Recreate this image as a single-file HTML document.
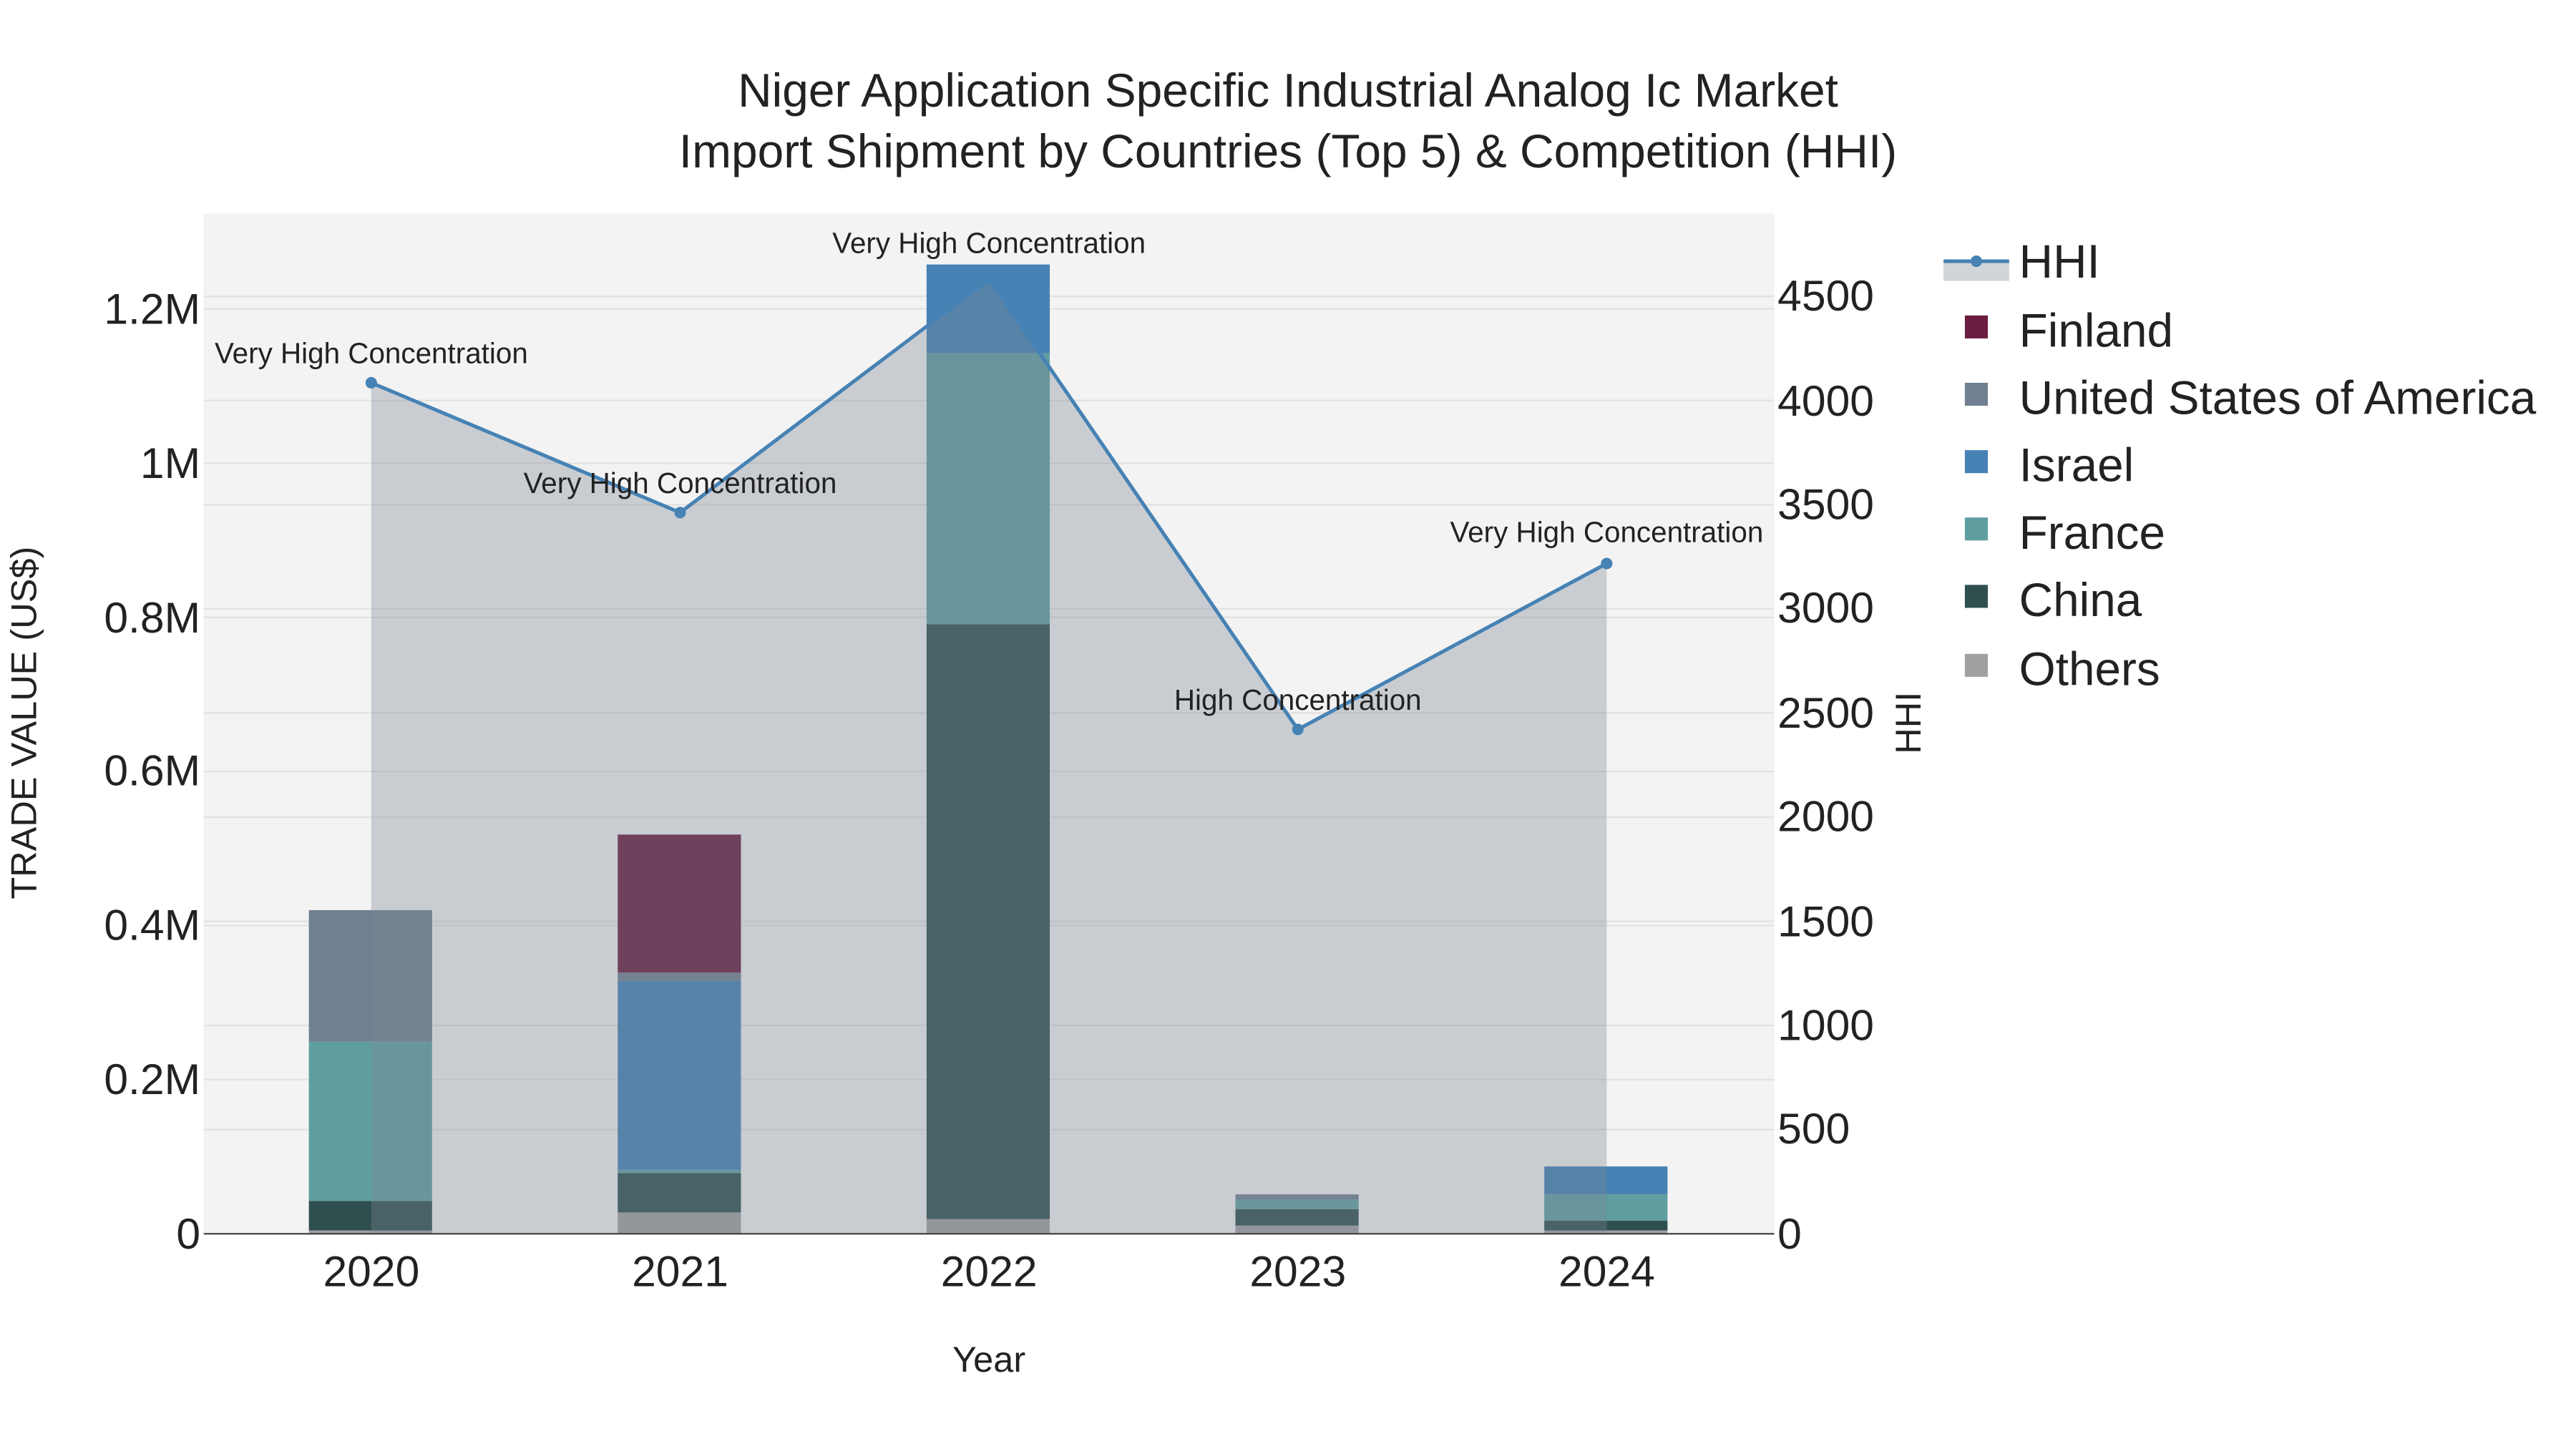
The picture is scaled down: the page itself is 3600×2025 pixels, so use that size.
<!DOCTYPE html>
<html><head><meta charset="utf-8"><style>
html,body{margin:0;padding:0;background:#fff;width:3600px;height:2025px;overflow:hidden}
svg{display:block}
text{font-family:"Liberation Sans",sans-serif;fill:#222}
</style></head><body>
<svg width="3600" height="2025" viewBox="0 0 1568 882" preserveAspectRatio="none" xmlns="http://www.w3.org/2000/svg">
<rect x="0" y="0" width="1568" height="882" fill="#fff"/>
<text x="784" y="65" font-size="28.7" text-anchor="middle">Niger Application Specific Industrial Analog Ic Market</text>
<text x="784" y="102" font-size="28.7" text-anchor="middle">Import Shipment by Countries (Top 5) &amp; Competition (HHI)</text>
<rect x="124" y="130" width="956" height="621" fill="#f3f3f3"/>
<g stroke="#e2e2e2" stroke-width="1">
<line x1="124" x2="1080" y1="657.2" y2="657.2"/><line x1="124" x2="1080" y1="563.4" y2="563.4"/>
<line x1="124" x2="1080" y1="469.6" y2="469.6"/><line x1="124" x2="1080" y1="375.8" y2="375.8"/>
<line x1="124" x2="1080" y1="282" y2="282"/><line x1="124" x2="1080" y1="188" y2="188"/>
<line x1="124" x2="1080" y1="687.6" y2="687.6"/><line x1="124" x2="1080" y1="624.2" y2="624.2"/>
<line x1="124" x2="1080" y1="560.8" y2="560.8"/><line x1="124" x2="1080" y1="497.4" y2="497.4"/>
<line x1="124" x2="1080" y1="434" y2="434"/><line x1="124" x2="1080" y1="370.6" y2="370.6"/>
<line x1="124" x2="1080" y1="307.2" y2="307.2"/><line x1="124" x2="1080" y1="243.8" y2="243.8"/>
<line x1="124" x2="1080" y1="180.4" y2="180.4"/>
</g>
<g>
<rect x="188" y="749" width="75" height="2" fill="#a0a0a0"/>
<rect x="188" y="731" width="75" height="18" fill="#2f4f4f"/>
<rect x="188" y="634" width="75" height="97" fill="#5f9ea0"/>
<rect x="188" y="554" width="75" height="80" fill="#708090"/>

<rect x="376" y="738" width="75" height="13" fill="#a0a0a0"/>
<rect x="376" y="714" width="75" height="24" fill="#2f4f4f"/>
<rect x="376" y="712" width="75" height="2" fill="#5f9ea0"/>
<rect x="376" y="597" width="75" height="115" fill="#4682b4"/>
<rect x="376" y="592" width="75" height="5" fill="#708090"/>
<rect x="376" y="508" width="75" height="84" fill="#6b1d40"/>

<rect x="564" y="742" width="75" height="9" fill="#a0a0a0"/>
<rect x="564" y="380" width="75" height="362" fill="#2f4f4f"/>
<rect x="564" y="215" width="75" height="165" fill="#5f9ea0"/>
<rect x="564" y="161" width="75" height="54" fill="#4682b4"/>

<rect x="752" y="746" width="75" height="5" fill="#a0a0a0"/>
<rect x="752" y="736" width="75" height="10" fill="#2f4f4f"/>
<rect x="752" y="730" width="75" height="6" fill="#5f9ea0"/>
<rect x="752" y="727" width="75" height="3" fill="#708090"/>

<rect x="940" y="749" width="75" height="2" fill="#a0a0a0"/>
<rect x="940" y="743" width="75" height="6" fill="#2f4f4f"/>
<rect x="940" y="727" width="75" height="16" fill="#5f9ea0"/>
<rect x="940" y="710" width="75" height="17" fill="#4682b4"/>
</g>
<polygon points="226,751 226,233 414,312 602,170 790,444 978,343 978,751" fill="rgba(124,134,150,0.35)"/>
<polyline points="226,233 414,312 602,170 790,444 978,343" fill="none" stroke="#4682b4" stroke-width="2.2"/>
<g fill="#4682b4"><circle cx="226" cy="233" r="3.5"/><circle cx="414" cy="312" r="3.5"/><circle cx="602" cy="170" r="3.5"/><circle cx="790" cy="444" r="3.5"/><circle cx="978" cy="343" r="3.5"/></g>
<line x1="124" x2="1080" y1="751" y2="751" stroke="#444" stroke-width="1"/>
<g font-size="17.6" text-anchor="middle">
<text x="226" y="221">Very High Concentration</text>
<text x="414" y="300">Very High Concentration</text>
<text x="602" y="154">Very High Concentration</text>
<text x="790" y="432">High Concentration</text>
<text x="978" y="330">Very High Concentration</text>
</g>
<g font-size="26.4" text-anchor="end">
<text x="122" y="760">0</text><text x="122" y="666">0.2M</text><text x="122" y="572">0.4M</text>
<text x="122" y="478">0.6M</text><text x="122" y="385">0.8M</text><text x="122" y="291">1M</text><text x="122" y="197">1.2M</text>
</g>
<g font-size="26.4" text-anchor="start">
<text x="1082" y="760">0</text><text x="1082" y="696">500</text><text x="1082" y="633">1000</text>
<text x="1082" y="570">1500</text><text x="1082" y="506">2000</text><text x="1082" y="443">2500</text>
<text x="1082" y="379">3000</text><text x="1082" y="316">3500</text><text x="1082" y="253">4000</text><text x="1082" y="189">4500</text>
</g>
<g font-size="26.4" text-anchor="middle">
<text x="226" y="783">2020</text><text x="414" y="783">2021</text><text x="602" y="783">2022</text><text x="790" y="783">2023</text><text x="978" y="783">2024</text>
</g>
<text x="602" y="835" font-size="22" text-anchor="middle">Year</text>
<text transform="translate(22,440) rotate(-90)" font-size="22" text-anchor="middle">TRADE VALUE (US$)</text>
<text transform="translate(1169,440) rotate(-90)" font-size="22" text-anchor="middle">HHI</text>
<rect x="1183" y="159" width="40" height="12" fill="rgba(124,134,150,0.35)"/>
<line x1="1183" x2="1223" y1="159" y2="159" stroke="#4682b4" stroke-width="2.2"/>
<circle cx="1203" cy="159" r="3.5" fill="#4682b4"/>
<g font-size="28.6">
<text x="1229" y="169">HHI</text>
<rect x="1196" y="192" width="14" height="14" fill="#6b1d40"/><text x="1229" y="211">Finland</text>
<rect x="1196" y="233" width="14" height="14" fill="#708090"/><text x="1229" y="252">United States of America</text>
<rect x="1196" y="274" width="14" height="14" fill="#4682b4"/><text x="1229" y="293">Israel</text>
<rect x="1196" y="315" width="14" height="14" fill="#5f9ea0"/><text x="1229" y="334">France</text>
<rect x="1196" y="356" width="14" height="14" fill="#2f4f4f"/><text x="1229" y="375">China</text>
<rect x="1196" y="398" width="14" height="14" fill="#a0a0a0"/><text x="1229" y="417">Others</text>
</g>
</svg>
</body></html>
